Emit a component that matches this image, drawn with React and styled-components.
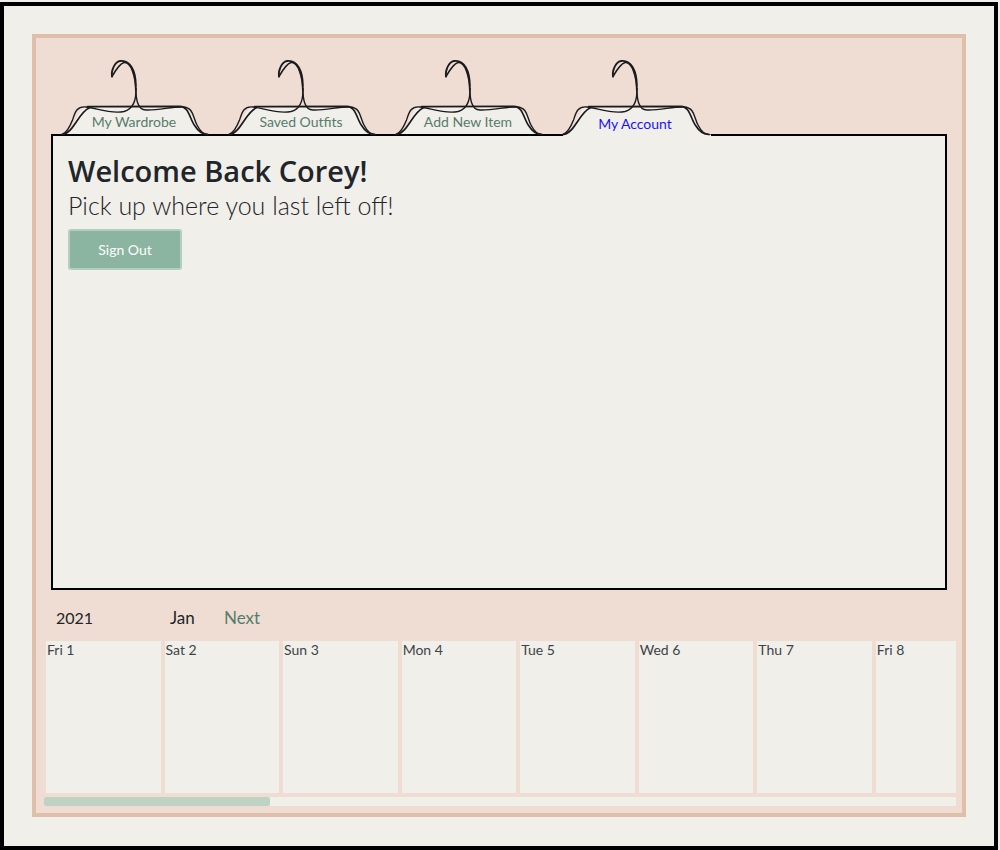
import React from "react";
import styled, { createGlobalStyle } from "styled-components";

const GlobalStyle = createGlobalStyle`
  *, *::before, *::after { box-sizing: border-box; }
  body {
    margin: 0;
    background: #f1efea;
    color: #212529;
    font-family: Lato, "Liberation Sans", sans-serif;
  }
`;

const Page = styled.div`
  display: flex;
  min-height: 100vh;
  padding: 2px 2px 0 0;
`;

const Outer = styled.div`
  display: flex;
  flex: 1;
  min-width: 0;
  padding: 28px 28px 29px;
  border: 4px solid #000;
`;

const Frame = styled.main`
  display: flex;
  flex: 1;
  flex-direction: column;
  min-width: 0;
  border: 4px solid #dfbfa9;
  background: #efddd3;
`;

const Closet = styled.section`
  display: flex;
  flex: 1;
  flex-direction: column;
  padding: 20px 15px 0;
`;

const Tabs = styled.nav`
  display: flex;
  gap: 7px;
  margin-bottom: -2px;
  padding-left: 3px;
  z-index: 1;
`;

const Tab = styled.a`
  display: grid;
  width: 160px;
  color: ${(p) => (p.$active ? "#1a12ff" : "#557c6d")};
  font-size: 14px;
  line-height: 20px;
  text-align: center;
  text-decoration: none;

  > * {
    grid-area: 1 / 1;
  }
`;

const TabLabel = styled.span`
  align-self: end;
  padding-bottom: ${(p) => (p.$active ? 2 : 4)}px;
`;

const Panel = styled.div`
  flex: 1;
  padding: 16px 15px;
  border: 2px solid #000;
  background: #f1efea;
`;

const Title = styled.h1`
  margin: 0;
  font-family: "Open Sans", "Noto Sans", sans-serif;
  font-size: 29px;
  font-weight: 600;
  line-height: 38px;
`;

const Subtitle = styled.p`
  margin: 0 0 9px;
  font-size: 25px;
  font-weight: 300;
  line-height: 30px;
`;

const SignOut = styled.button`
  width: 114px;
  height: 41px;
  padding: 0;
  border: 2px solid #b4cfc0;
  border-radius: 3px;
  background: #8bb5a0;
  color: #fff;
  font: inherit;
  font-size: 14px;
`;

const Calendar = styled.section`
  padding: 0 6px 7px 8px;
`;

const CalendarNav = styled.div`
  display: flex;
  align-items: center;
  height: 49px;
  padding: 6px 12px 0;
  font-size: 17px;
  line-height: 24px;
`;

const Year = styled.span`
  width: 114px;
  font-size: 16px;
`;

const Month = styled.span`
  width: 54px;
`;

const NextLink = styled.a`
  color: #557c6d;
  text-decoration: none;
`;

const Days = styled.div`
  display: flex;
  overflow: hidden;
`;

const Day = styled.div`
  flex: 0 0 13%;
  height: 156px;
  padding: 0 1px;
  border: 2px solid #efddd3;
  background: #f1efea;
  color: #3d4346;
  font-size: 14px;
  line-height: 18px;
`;

const Track = styled.div`
  height: 9px;
  margin-top: 2px;
  background: #f1efea;
`;

const Thumb = styled.div`
  width: 24.8%;
  height: 9px;
  border-radius: 2px;
  background: #bed3c3;
`;

const Hanger = ({ active }) => (
  <svg width="160" height="78" viewBox="0 0 160 78" fill="none" aria-hidden="true">
    <path
      d="M8 76.5C18 75 20 62 27 52C30 48 34 49 78 49H128C138 50 140 66 146 72C149 76 152 76.5 156 76.5V78H8Z"
      fill="#f1efea"
    />
    {!active && <path d="M0 77H160" stroke="#000" strokeWidth="2" />}
    <g stroke="#1b1b1d" strokeLinecap="round" strokeLinejoin="round">
      <path strokeWidth="1.8" d="M58 18.5C57 14 60 4 66 3C76 1.5 82 13 81.8 28" />
      <path strokeWidth="1.7" d="M58 18.5C60 15 65 6 70 4.5C77 3.5 81.500 18 81.800 32" />
      <path strokeWidth="1.400" d="M81.800 30C82.500 42 79 51 70 53.500C57 56.500 42 50 32 49C22 48 21 55 18.500 62C15 71 12 75 8 76.500" />
      <path strokeWidth="1.400" d="M81.800 30C82 40 83 52 92 52C105 52.500 118 48.500 129 49C140 49.500 139 60 143 67C146 73 149 76.500 154 76.500" />
      <path strokeWidth="1.700" d="M8 76.500C20 75 24 55 35 50C37 48.500 29 48.500 38 48.700L126 48.300C135 48.500 136 62 141 68C144 73 148 76.500 154 76.500" />
    </g>
  </svg>
);

const tabs = ["My Wardrobe", "Saved Outfits", "Add New Item", "My Account"];
const days = ["Fri 1", "Sat 2", "Sun 3", "Mon 4", "Tue 5", "Wed 6", "Thu 7", "Fri 8"];

export default function App() {
  return (
    <Page>
      <GlobalStyle />
      <Outer>
        <Frame>
          <Closet>
            <Tabs>
              {tabs.map((name) => {
                const active = name === "My Account";
                return (
                  <Tab key={name} href="#" $active={active} aria-current={active ? "page" : undefined}>
                    <Hanger active={active} />
                    <TabLabel $active={active}>{name}</TabLabel>
                  </Tab>
                );
              })}
            </Tabs>
            <Panel>
              <Title>Welcome Back Corey!</Title>
              <Subtitle>Pick up where you last left off!</Subtitle>
              <SignOut type="button">Sign Out</SignOut>
            </Panel>
          </Closet>
          <Calendar>
            <CalendarNav>
              <Year>2021</Year>
              <Month>Jan</Month>
              <NextLink href="#">Next</NextLink>
            </CalendarNav>
            <Days>
              {days.map((day) => (
                <Day key={day}>{day}</Day>
              ))}
            </Days>
            <Track>
              <Thumb />
            </Track>
          </Calendar>
        </Frame>
      </Outer>
    </Page>
  );
}
